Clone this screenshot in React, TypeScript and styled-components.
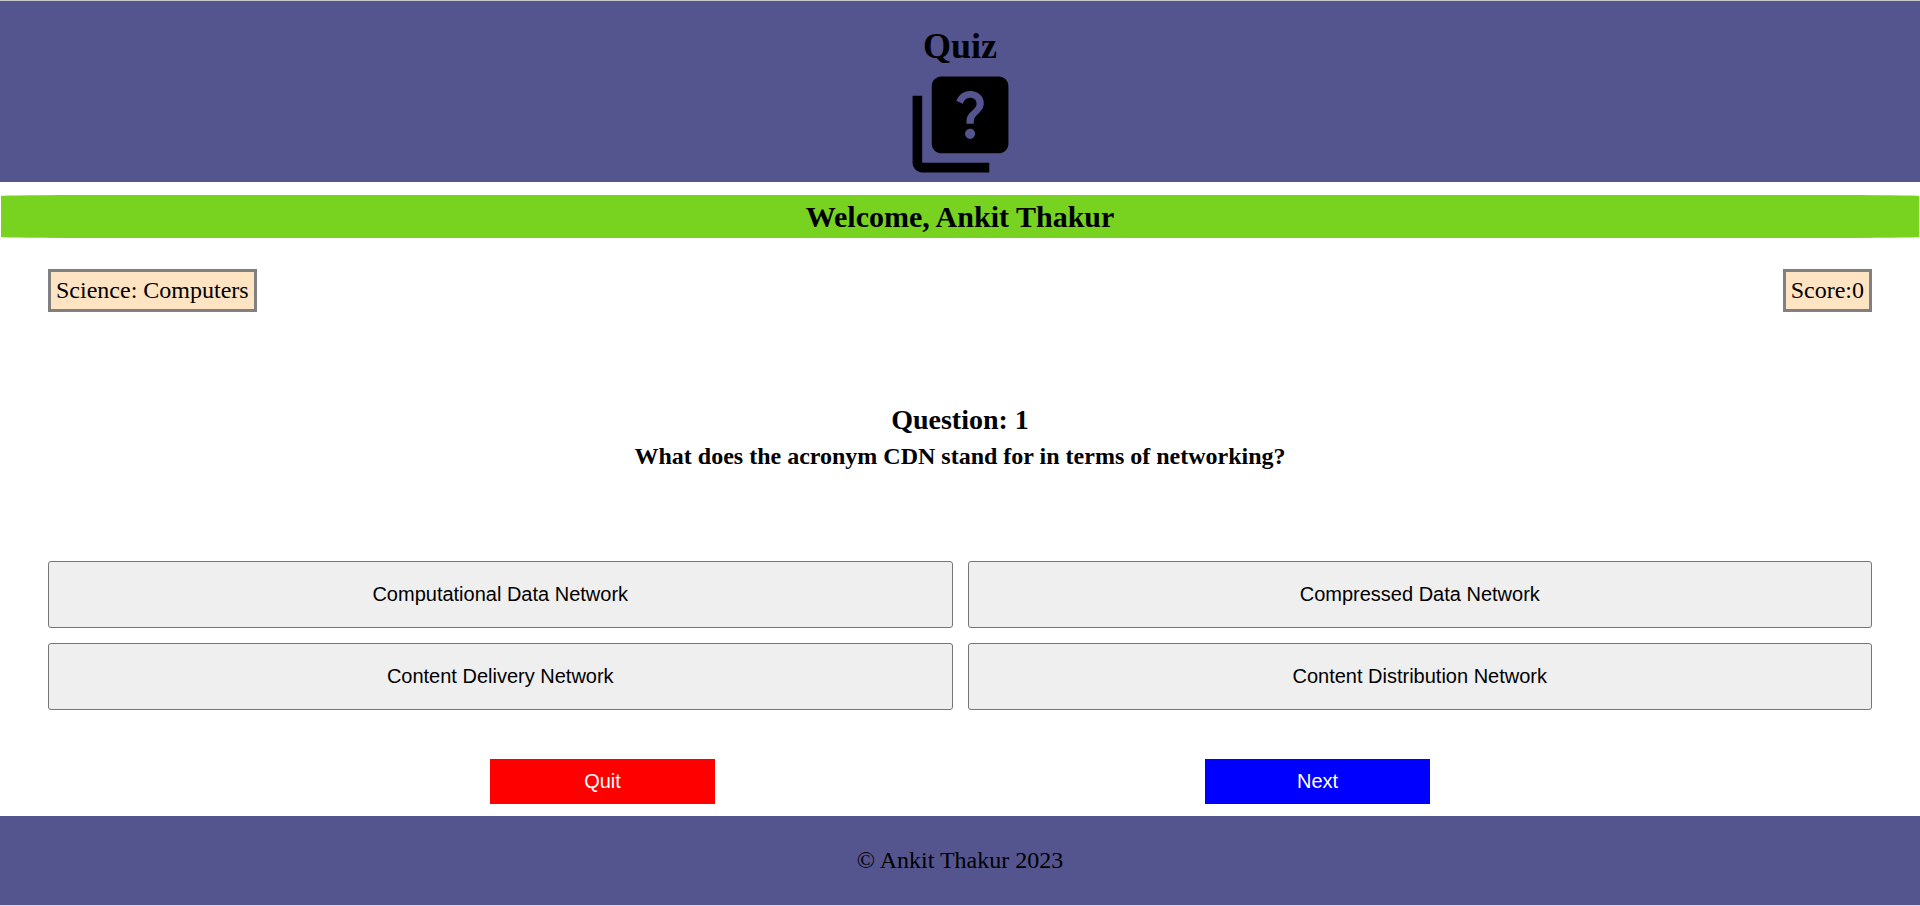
import React from "react";
import styled, { createGlobalStyle } from "styled-components";

const Global = createGlobalStyle`
  * { box-sizing: border-box; margin: 0; padding: 0; }
  body { background: #fff; color: #000; font-family: "Liberation Serif", "Times New Roman", serif; font-size: 24px; }
`;

const Page = styled.div`
  display: flex;
  flex-direction: column;
  min-height: 100vh;
  border-top: 1px solid #c8c8c8;
  border-bottom: 1px solid #dcdcdc;
`;

const Header = styled.header`
  display: flex;
  flex-direction: column;
  align-items: center;
  padding: 24px 0 0;
  background: #54548e;
`;

const Title = styled.h1`
  font-size: 36px;
  line-height: 42px;
`;

const Logo = styled.svg`
  display: block;
  width: 115px;
  height: 115px;
`;

const Welcome = styled.h2`
  margin: 13px 1px 0;
  border-radius: 5% / 1px;
  background: #78d321;
  font-size: 30px;
  line-height: 43px;
  text-align: center;
`;

const Main = styled.main`
  padding: 31px 0 12px;
`;

const Info = styled.div`
  display: flex;
  justify-content: space-between;
  padding: 0 48px;
`;

const Tag = styled.p`
  padding: 4px 5px;
  border: 3px solid #808080;
  background: #ffe4c4;
  line-height: 29px;
`;

const Question = styled.section`
  padding: 90px 48px 87px;
  text-align: center;
`;

const Number = styled.h2`
  font-size: 28px;
  line-height: 36px;
`;

const Prompt = styled.h3`
  font-size: 24px;
  line-height: 36px;
`;

const Options = styled.div`
  display: grid;
  grid-template-columns: 1fr 1fr;
  gap: 15px;
  padding: 0 48px;
`;

const Option = styled.button`
  height: 67px;
  border: 1px solid #767676;
  border-radius: 3px;
  background: #efefef;
  font: 20px "Liberation Sans", Arial, sans-serif;
  color: #000;
`;

const Actions = styled.div`
  display: flex;
  justify-content: space-evenly;
  padding-top: 49px;
`;

const Action = styled.button<{ $color: string }>`
  width: 225px;
  height: 45px;
  border: 0;
  background: ${(p) => p.$color};
  font: 20px "Liberation Sans", Arial, sans-serif;
  color: #fff;
`;

const Footer = styled.footer`
  background: #54548e;
  line-height: 89px;
  text-align: center;
`;

const answers = [
  "Computational Data Network",
  "Compressed Data Network",
  "Content Delivery Network",
  "Content Distribution Network",
];

export default function App() {
  return (
    <Page>
      <Global />
      <Header>
        <Title>Quiz</Title>
        <Logo viewBox="0 0 24 24" aria-hidden="true">
          <path d="M4 6H2v14c0 1.100.9 2 2 2h14v-2H4V6zm16-4H8c-1.100 0-2 .9-2 2v12c0 1.100.9 2 2 2h12c1.100 0 2-.9 2-2V4c0-1.100-.9-2-2-2zm-5.990 13c-.59 0-1.050-.47-1.050-1.050 0-.59.47-1.040 1.050-1.040.59 0 1.040.45 1.040 1.040-.01.58-.45 1.050-1.040 1.050zm2.500-6.170c-.63.93-1.230 1.210-1.560 1.810-.13.24-.18.4-.18 1.180h-1.520c0-.41-.06-1.080.26-1.650.41-.73 1.180-1.160 1.630-1.800.48-.68.21-1.940-1.140-1.940-.88 0-1.320.67-1.500 1.230l-1.370-.57C11.510 5.960 12.520 5 13.990 5c1.230 0 2.080.56 2.510 1.260.37.6.58 1.730.01 2.570z" />
        </Logo>
      </Header>
      <Welcome>Welcome, Ankit Thakur</Welcome>
      <Main>
        <Info>
          <Tag>Science: Computers</Tag>
          <Tag>Score:0</Tag>
        </Info>
        <Question>
          <Number>Question: 1</Number>
          <Prompt>What does the acronym CDN stand for in terms of networking?</Prompt>
        </Question>
        <Options>
          {answers.map((a) => (
            <Option key={a} type="button">{a}</Option>
          ))}
        </Options>
        <Actions>
          <Action type="button" $color="#ff0000">Quit</Action>
          <Action type="button" $color="#0000ff">Next</Action>
        </Actions>
      </Main>
      <Footer>© Ankit Thakur 2023</Footer>
    </Page>
  );
}
